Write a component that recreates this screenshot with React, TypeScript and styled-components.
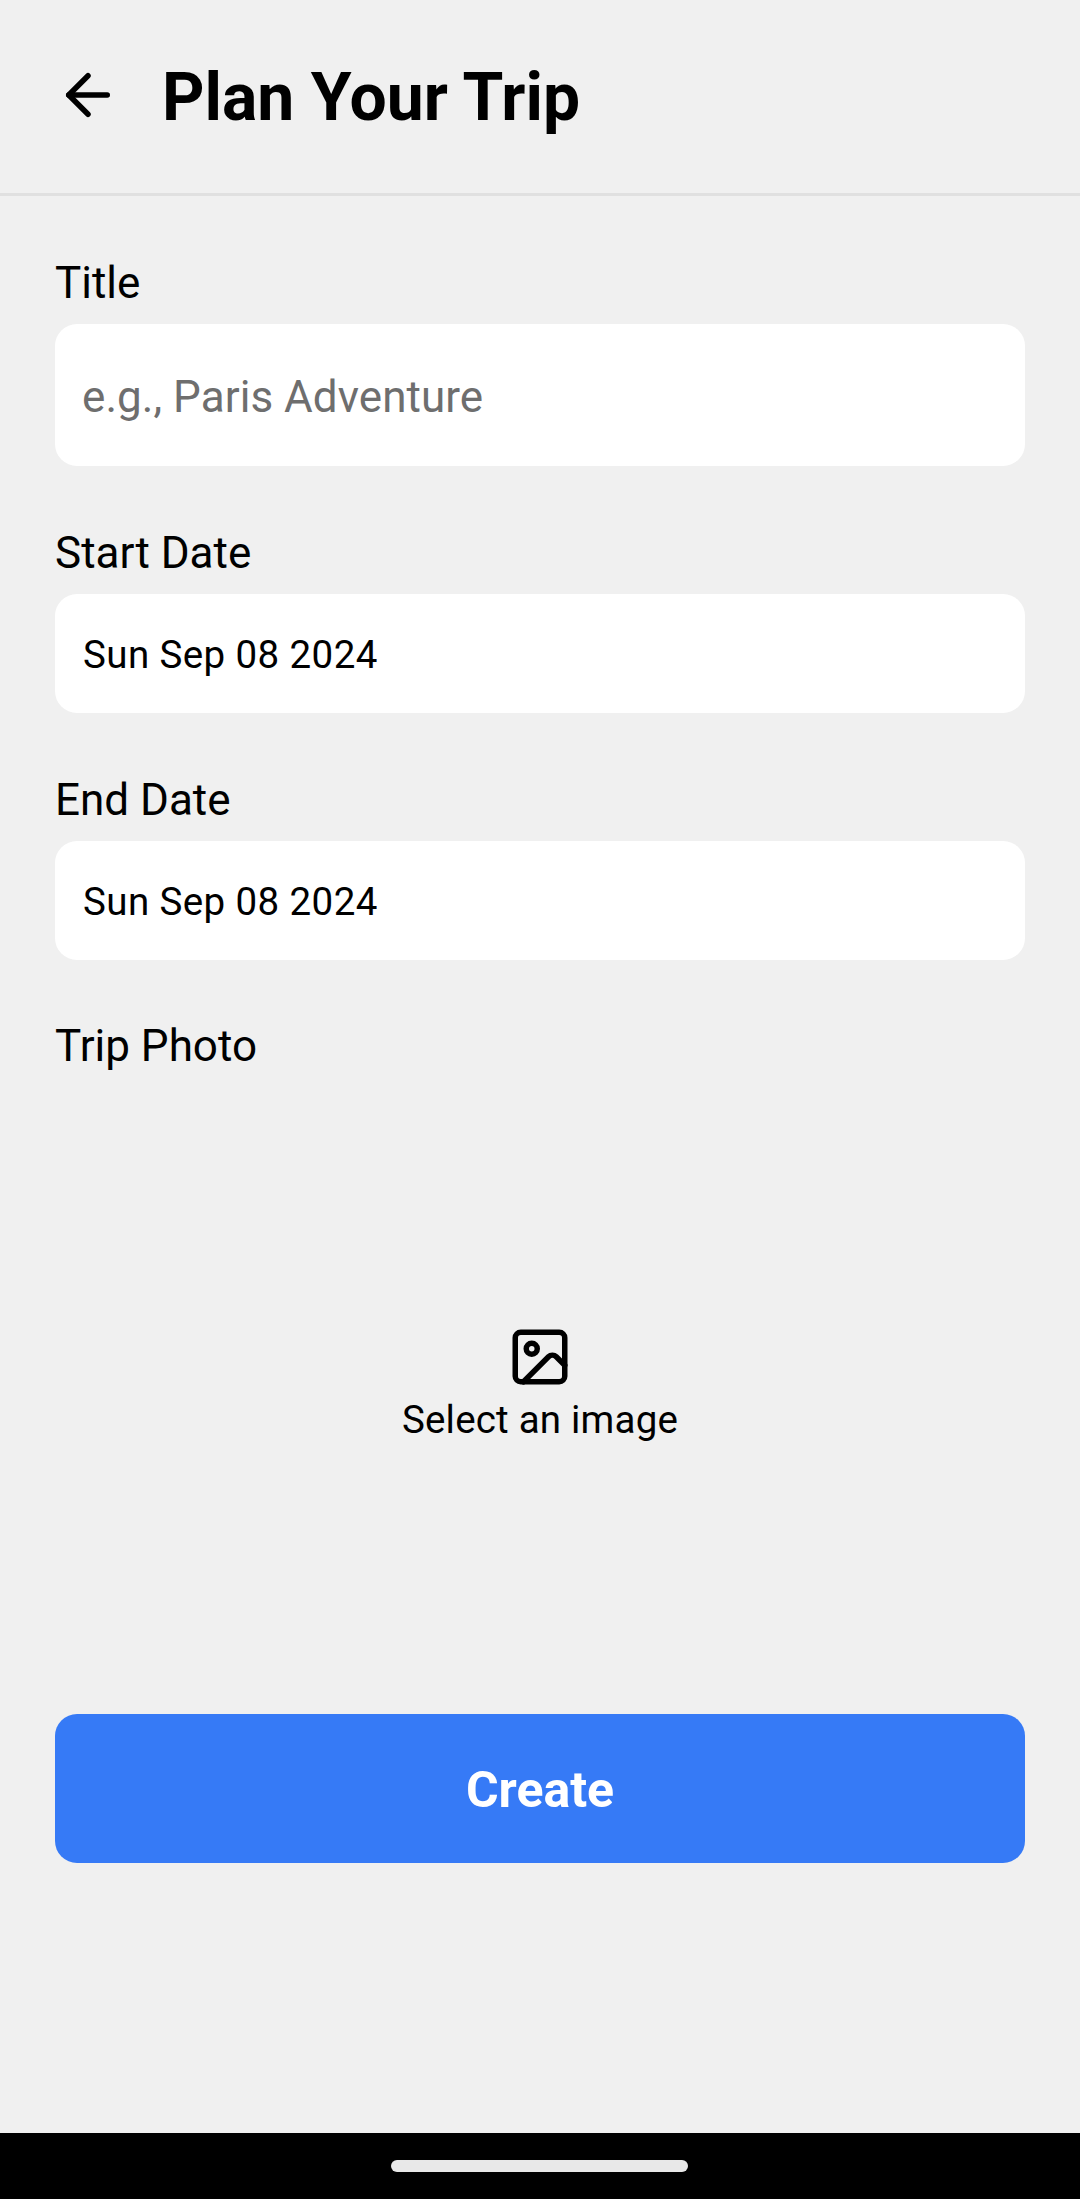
import * as React from "react";
import styled, { createGlobalStyle } from "styled-components";
import { ArrowLeft, Image as ImageIcon } from "lucide-react";

const GlobalStyle = createGlobalStyle`
  html, body {
    margin: 0;
    padding: 0;
    background: #f0f0f0;
  }
  * {
    box-sizing: border-box;
  }
`;

const Screen = styled.div`
  width: 1080px;
  height: 2199px;
  display: flex;
  flex-direction: column;
  background: #f0f0f0;
  color: #000;
  font-family: Roboto, "Liberation Sans", sans-serif;
`;

const Header = styled.header`
  height: 196px;
  flex: none;
  display: flex;
  align-items: center;
  gap: 41px;
  padding: 0 55px 4px;
  border-bottom: 3px solid #e0e0e0;
`;

const BackButton = styled.button`
  width: 66px;
  height: 66px;
  padding: 0;
  border: 0;
  background: none;
  color: #000;
  display: flex;
`;

const Heading = styled.h1`
  margin: 6px 0 0;
  font-size: 66px;
  line-height: 77px;
  font-weight: 700;
`;

const Form = styled.main`
  flex: 1;
  display: flex;
  flex-direction: column;
  padding: 61px 55px 0;
`;

const Label = styled.label`
  display: block;
  font-size: 44px;
  line-height: 52px;
  margin-bottom: 15px;
`;

const Field = styled.div<{ $gap: number }>`
  margin-bottom: ${(p) => p.$gap}px;
`;

const TitleInput = styled.input`
  display: block;
  width: 100%;
  height: 142px;
  padding: 4px 27px 0;
  border: 0;
  border-radius: 22px;
  background: #fff;
  font-family: inherit;
  font-size: 44px;
  letter-spacing: 0.05px;
  color: #000;
  outline: none;

  &::placeholder {
    color: #6e6e6e;
    opacity: 1;
  }
`;

const DateBox = styled.div`
  height: 119px;
  padding: 2px 28px 0;
  display: flex;
  align-items: center;
  border-radius: 22px;
  background: #fff;
  font-size: 38.5px;
  letter-spacing: 0.4px;
`;

const PhotoPicker = styled.div`
  height: 627px;
  padding-bottom: 35px;
  display: flex;
  flex-direction: column;
  align-items: center;
  justify-content: center;
  gap: 7px;
  font-size: 38.5px;
  line-height: 45px;
  letter-spacing: 0.2px;
`;

const CreateButton = styled.button`
  height: 149px;
  flex: none;
  padding: 2px 0 0;
  border: 0;
  border-radius: 22px;
  background: #367af6;
  color: #fff;
  font-family: inherit;
  font-size: 50px;
  font-weight: 700;
`;

const NavBar = styled.div`
  height: 66px;
  flex: none;
  display: flex;
  justify-content: center;
  padding: 27px 1px 0 0;
  background: #000;
`;

const HomePill = styled.div`
  width: 297px;
  height: 12px;
  border-radius: 6px;
  background: #e8e8e8;
`;

const App: React.FC = () => (
  <Screen>
    <GlobalStyle />
    <Header>
      <BackButton aria-label="Back">
        <ArrowLeft size={66} strokeWidth={2} />
      </BackButton>
      <Heading>Plan Your Trip</Heading>
    </Header>
    <Form>
      <Field $gap={61}>
        <Label htmlFor="trip-title">Title</Label>
        <TitleInput id="trip-title" placeholder="e.g., Paris Adventure" />
      </Field>
      <Field $gap={61}>
        <Label>Start Date</Label>
        <DateBox>Sun Sep 08 2024</DateBox>
      </Field>
      <Field $gap={60}>
        <Label>End Date</Label>
        <DateBox>Sun Sep 08 2024</DateBox>
      </Field>
      <div>
        <Label>Trip Photo</Label>
        <PhotoPicker>
          <ImageIcon size={66} strokeWidth={2} />
          <span>Select an image</span>
        </PhotoPicker>
      </div>
      <CreateButton>Create</CreateButton>
    </Form>
    <NavBar>
      <HomePill />
    </NavBar>
  </Screen>
);

export default App;
